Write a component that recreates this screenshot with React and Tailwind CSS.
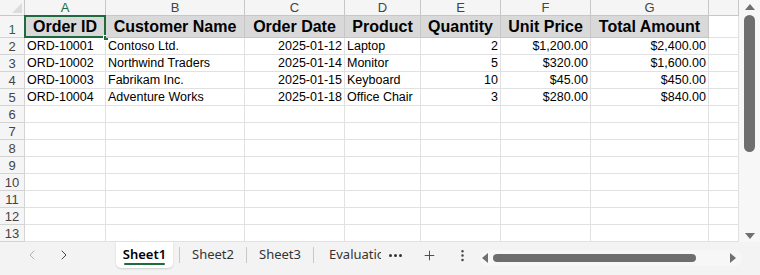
import { ChevronLeft, ChevronRight, Plus, EllipsisVertical } from 'lucide-react';

const cols = ['A', 'B', 'C', 'D', 'E', 'F', 'G', ''];
const widths = ['w-[81px]', 'w-[139px]', 'w-[100px]', 'w-[76px]', 'w-[80px]', 'w-[90px]', 'w-[118px]', 'w-[30px]'];

const headers = ['Order ID', 'Customer Name', 'Order Date', 'Product', 'Quantity', 'Unit Price', 'Total Amount'];

const rows = [
  ['ORD-10001', 'Contoso Ltd.', '2025-01-12', 'Laptop', '2', '$1,200.00', '$2,400.00'],
  ['ORD-10002', 'Northwind Traders', '2025-01-14', 'Monitor', '5', '$320.00', '$1,600.00'],
  ['ORD-10003', 'Fabrikam Inc.', '2025-01-15', 'Keyboard', '10', '$45.00', '$450.00'],
  ['ORD-10004', 'Adventure Works', '2025-01-18', 'Office Chair', '3', '$280.00', '$840.00'],
];

// columns whose values sit on the right
const rightAligned = [false, false, true, false, true, true, true];

function RowHeader({ n, tall, active }) {
  return (
    <div
      className={`w-[25px] shrink-0 border-r border-b border-[#d4d4d4] bg-[#f5f5f5] flex items-end justify-center text-[13px] leading-none pb-[1px] ${tall ? 'h-[22px]' : 'h-[17px]'} ${active ? 'text-[#1e6b3e]' : 'text-[#444]'}`}
    >
      {n}
    </div>
  );
}

export default function App() {
  const emptyRows = [6, 7, 8, 9, 10, 11, 12, 13];

  return (
    <div className="w-[760px] h-[275px] overflow-hidden bg-white flex flex-col" style={{ fontFamily: '"Liberation Sans", Arial, sans-serif' }}>
      <div className="flex h-[242px]">
        {/* Grid */}
        <div className="w-[739px] flex flex-col">
          {/* Column letters */}
          <div className="flex h-[16px]">
            <div className="w-[25px] shrink-0 bg-[#f5f5f5] border-r border-b border-[#c8c8c8] relative overflow-hidden">
              <div className="absolute right-[2px] bottom-[2px] w-0 h-0 border-l-[10px] border-l-transparent border-b-[10px] border-b-[#dcdcdc]" />
            </div>
            {cols.map((c, i) => (
              <div
                key={i}
                className={`${widths[i]} shrink-0 bg-[#f5f5f5] border-r border-b border-[#c8c8c8] flex items-center justify-center text-[13px] leading-none ${i === 0 ? 'text-[#1e6b3e] border-b-[#1e6b3e]' : 'text-[#444]'}`}
              >
                {c}
              </div>
            ))}
          </div>

          {/* Row 1: headers */}
          <div className="flex">
            <RowHeader n={1} tall active />
            {cols.map((c, i) => (
              <div
                key={i}
                className={`${widths[i]} shrink-0 h-[22px] border-r border-b relative flex items-center justify-center font-bold text-[16px] text-black whitespace-nowrap ${i < 7 ? 'bg-[#d9d9d9] border-[#c6c6c6]' : 'bg-white border-[#e1e1e1]'}`}
              >
                {headers[i] || ''}
                {i === 0 && (
                  <>
                    <div className="absolute -left-[1px] -top-[1px] -right-[1px] -bottom-[1px] border-2 border-[#1e6b3e]" />
                    <div className="absolute -right-[4px] -bottom-[4px] w-[6px] h-[6px] bg-[#1e6b3e] border border-white" />
                  </>
                )}
              </div>
            ))}
          </div>

          {/* Data rows */}
          {rows.map((r, ri) => (
            <div key={ri} className="flex">
              <RowHeader n={ri + 2} />
              {cols.map((c, i) => (
                <div
                  key={i}
                  className={`${widths[i]} shrink-0 h-[17px] border-r border-b border-[#e1e1e1] flex items-end pb-[2px] px-[2px] text-[12.5px] leading-none text-black whitespace-nowrap overflow-hidden ${rightAligned[i] ? 'justify-end' : 'justify-start'}`}
                >
                  {r[i] || ''}
                </div>
              ))}
            </div>
          ))}

          {emptyRows.map((n) => (
            <div key={n} className="flex">
              <RowHeader n={n} />
              {cols.map((c, i) => (
                <div key={i} className={`${widths[i]} shrink-0 h-[17px] border-r border-b border-[#e1e1e1]`} />
              ))}
            </div>
          ))}
        </div>

        {/* Vertical scrollbar */}
        <div className="w-[21px] bg-[#f7f7f7] flex flex-col items-center pt-[4px]">
          <div className="w-0 h-0 border-l-[5px] border-l-transparent border-r-[5px] border-r-transparent border-b-[6px] border-b-[#707070]" />
          <div className="mt-[5px] w-[11px] h-[137px] rounded-full bg-[#6e6e6e]" />
          <div className="mt-auto mb-[3px] w-0 h-0 border-l-[5px] border-l-transparent border-r-[5px] border-r-transparent border-t-[6px] border-t-[#707070]" />
        </div>
      </div>

      {/* Sheet tab bar */}
      <div className="flex-1 bg-[#f3f3f3] flex items-start text-[13px] text-[#333]" style={{ fontFamily: '"Noto Sans", "Open Sans", sans-serif' }}>
        <div className="w-[116px] h-[26px] flex items-center pl-[24px] gap-[16px]">
          <ChevronLeft className="w-[16px] h-[16px] text-[#b0b0b0]" strokeWidth={1.5} />
          <ChevronRight className="w-[16px] h-[16px] text-[#444]" strokeWidth={1.5} />
        </div>
        <div className="w-[57px] h-[26px] bg-white rounded-b-[5px] shadow-[0_1px_2px_rgba(0,0,0,0.15)] flex flex-col items-center justify-center relative">
          <span className="font-semibold text-black">Sheet1</span>
          <div className="absolute bottom-[3px] left-[8px] right-[8px] h-[2px] bg-[#1e6b3e] rounded" />
        </div>
        <div className="h-[26px] flex items-center">
          <div className="w-[6px]" />
          <div className="w-px h-[16px] bg-[#c8c8c8]" />
          <span className="w-[66px] text-center">Sheet2</span>
          <div className="w-px h-[16px] bg-[#c8c8c8]" />
          <span className="w-[66px] text-center">Sheet3</span>
          <div className="w-px h-[16px] bg-[#c8c8c8]" />
          <span className="ml-[15px] w-[52px] overflow-hidden whitespace-nowrap">Evaluation</span>
          <div className="ml-[8px] flex gap-[2px]">
            <div className="w-[3px] h-[3px] rounded-full bg-[#333]" />
            <div className="w-[3px] h-[3px] rounded-full bg-[#333]" />
            <div className="w-[3px] h-[3px] rounded-full bg-[#333]" />
          </div>
          <Plus className="ml-[20px] w-[15px] h-[15px] text-[#444]" strokeWidth={1.5} />
          <EllipsisVertical className="ml-[18px] w-[15px] h-[15px] text-[#444]" strokeWidth={2} />
        </div>
        <div className="ml-[10px] mt-[8px] w-[262px] h-[16px] rounded-full bg-[#f7f7f7] flex items-center px-[2px]">
          <div className="w-0 h-0 border-t-[5px] border-t-transparent border-b-[5px] border-b-transparent border-r-[6px] border-r-[#707070]" />
          <div className="ml-[5px] w-[203px] h-[8px] rounded-full bg-[#6e6e6e]" />
          <div className="ml-auto mr-[4px] w-0 h-0 border-t-[5px] border-t-transparent border-b-[5px] border-b-transparent border-l-[6px] border-l-[#707070]" />
        </div>
      </div>
    </div>
  );
}
